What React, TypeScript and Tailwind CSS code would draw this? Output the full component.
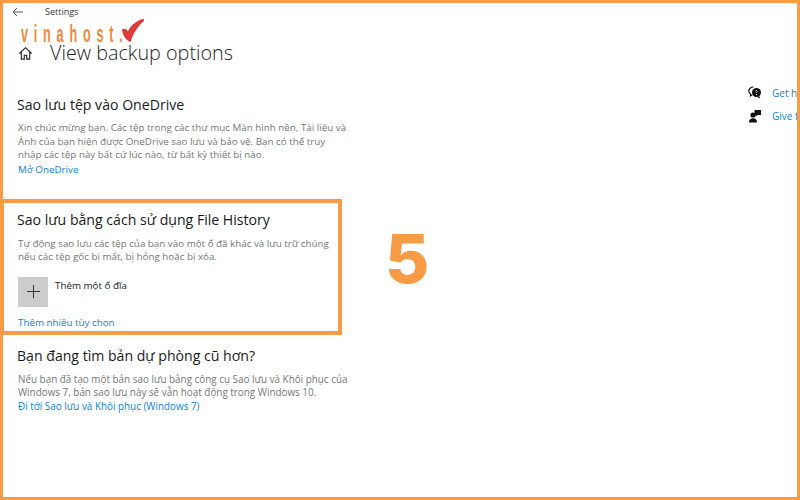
import React from "react";

function Section({ title, children, className = "" }: { title: string; children: React.ReactNode; className?: string }) {
  return (
    <section className={className}>
      <h2 className="text-[14.1px] leading-[22px] text-[#1a1a1a] font-normal whitespace-nowrap">{title}</h2>
      {children}
    </section>
  );
}

export default function App() {
  return (
    <div className="relative w-[800px] h-[500px] overflow-hidden bg-white border-[3px] border-[#f79c45] [font-family:'Open_Sans','Noto_Sans',sans-serif]">
      <div className="flex justify-between">
        <div className="w-[356px]">
          <header className="flex items-center h-[17px] pl-[9px]">
            <svg width="11" height="10" viewBox="0 0 11 10" fill="none" stroke="#555" strokeWidth="1">
              <path d="M11 5H1M5 1L1 5l4 4" />
            </svg>
            <span className="ml-[22px] text-[9px] text-[#333]">Settings</span>
          </header>
          <div className="flex items-center mt-[20px] pl-[15px] h-[26px]">
            <svg width="15" height="15" viewBox="0 0 16 16" fill="none" stroke="#222" strokeWidth="1.2">
              <path d="M1.5 8L8 1.8 14.5 8M3.5 6.5V14h3.2V9.8h2.6V14h3.2V6.5" />
            </svg>
            <h1 className="ml-[17px] text-[19.8px] font-light text-[#1f1f1f] whitespace-nowrap">View backup options</h1>
          </div>

          <Section title="Sao lưu tệp vào OneDrive" className="mt-[28px] pl-[14px]">
            <p className="mt-[5px] pl-[1px] text-[9.8px] leading-[13.5px] text-[#777] whitespace-nowrap">
              Xin chúc mừng bạn. Các tệp trong các thư mục Màn hình nền, Tài liệu và<br />
              Ảnh của bạn hiện được OneDrive sao lưu và bảo vệ. Bạn có thể truy<br />
              nhập các tệp này bất cứ lúc nào, từ bất kỳ thiết bị nào.
            </p>
            <a className="block mt-px pl-[1px] text-[9.8px] leading-[13px] text-[#0f7fd8]">Mở OneDrive</a>
          </Section>

          <div className="mt-[23px] w-[339px] h-[136px] border-y-4 border-r-4 border-l border-[#f79c45] pl-[13px] pt-[6px]">
            <Section title="Sao lưu bằng cách sử dụng File History">
              <p className="mt-[6px] pl-[1px] text-[9.8px] leading-[13px] text-[#777] whitespace-nowrap">
                Tự động sao lưu các tệp của bạn vào một ổ đã khác và lưu trữ chúng<br />
                nếu các tệp gốc bị mất, bị hỏng hoặc bị xóa.
              </p>
              <div className="flex mt-[14px] pl-[1px]">
                <div className="w-[30px] h-[30px] bg-[#cccccc] flex items-center justify-center">
                  <svg width="13" height="13" viewBox="0 0 13 13" stroke="#333" strokeWidth="1">
                    <path d="M6.5 0v13M0 6.5h13" />
                  </svg>
                </div>
                <span className="ml-[7px] text-[9.8px] leading-[17px] text-[#222]">Thêm một ổ đĩa</span>
              </div>
              <a className="block mt-[9px] pl-[1px] text-[9.8px] leading-[13px] text-[#0f7fd8]">Thêm nhiều tùy chọn</a>
            </Section>
          </div>

          <Section title="Bạn đang tìm bản dự phòng cũ hơn?" className="mt-[10px] pl-[14px]">
            <p className="mt-[6px] pl-[1px] text-[9.9px] leading-[13.5px] text-[#777] whitespace-nowrap">
              Nếu bạn đã tạo một bản sao lưu bằng công cụ Sao lưu và Khôi phục của<br />
              Windows 7, bản sao lưu này sẽ vẫn hoạt động trong Windows 10.
            </p>
            <a className="block pl-[1px] text-[9.9px] leading-[13px] text-[#0f7fd8]">Đi tới Sao lưu và Khôi phục (Windows 7)</a>
          </Section>
        </div>

        <aside className="w-[49px] mt-[80px] overflow-hidden shrink-0">
          <div className="flex items-center h-[20px] gap-[10px]">
            <svg className="shrink-0" width="14" height="14" viewBox="0 0 14 14">
              <path d="M5.5 1C2.7 1 .8 2.8.8 5c0 1.3.7 2.4 1.7 3.1V10l1.8-1.2" fill="none" stroke="#111" strokeWidth="1.2" />
              <circle cx="8.5" cy="6.5" r="4.5" fill="#111" />
              <path d="M11 10l1.5 2.5L9 11z" fill="#111" />
              <circle cx="8.5" cy="8.5" r=".7" fill="#fff" />
              <path d="M8.5 7V6.3c.9-.3 1-1.7-.1-1.7-.5 0-.8.2-1 .6" fill="none" stroke="#fff" strokeWidth=".7" />
            </svg>
            <span className="text-[10px] text-[#0f7fd8] whitespace-nowrap">Get help</span>
          </div>
          <div className="flex items-center h-[20px] gap-[10px] mt-[3px]">
            <svg className="shrink-0" width="14" height="14" viewBox="0 0 14 14" fill="#111">
              <circle cx="5" cy="6" r="2.6" />
              <path d="M1 13.5c0-3 1.6-4.3 4-4.3s4 1.3 4 4.3z" />
              <path d="M6.5 1H13v5H9.5L7.5 7.500V6h-1z" />
            </svg>
            <span className="text-[10px] text-[#0f7fd8] whitespace-nowrap">Give feedback</span>
          </div>
        </aside>
      </div>

      {/* watermark logo over the header */}
      <div className="absolute left-[18px] top-[16px] flex items-start">
        <span className="block w-[100px] text-[23px] leading-[30px] font-bold text-[#f0893c] tracking-[10.5px] origin-left scale-x-[.55] whitespace-nowrap [font-family:'Liberation_Sans',sans-serif]">vinahost.</span>
        <svg className="-mt-[1px]" width="24" height="26" viewBox="0 0 26 27">
          <path d="M1 12c2-1.5 5-1.5 6.500 2C10 8 16 3 23 .5c2-.5 2.500 1 1.500 2.500C18 9 13 16 10.500 25.500 7 25 2 20 1 12z" fill="#e03a3a" />
        </svg>
      </div>

      {/* big step number beside the highlighted box */}
      <span className="absolute left-[382px] top-[215px] text-[68px] leading-[80px] font-extrabold text-[#f79c45] [font-family:Inter,sans-serif]">5</span>
    </div>
  );
}
